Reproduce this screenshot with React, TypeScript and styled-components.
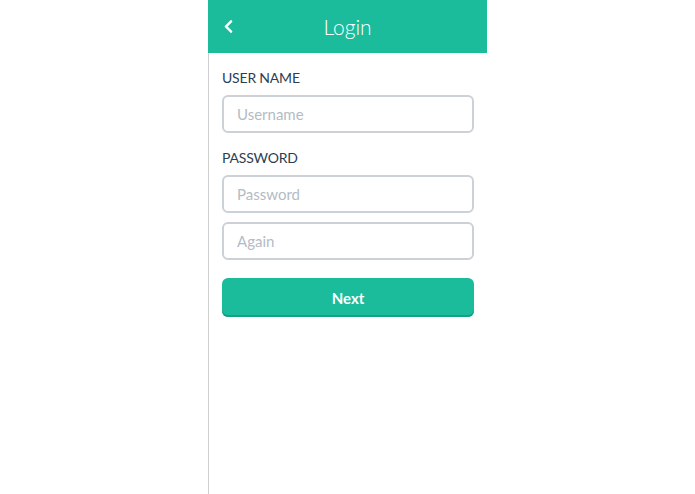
import React from 'react';
import styled, { createGlobalStyle } from 'styled-components';
import { FaChevronLeft } from 'react-icons/fa';

const GlobalStyle = createGlobalStyle`
  html, body {
    margin: 0;
    padding: 0;
    background: #ffffff;
  }

  body {
    font-family: Lato, "Open Sans", sans-serif;
  }

  * {
    box-sizing: border-box;
  }
`

export default function App() {
  return (
    <>
      <GlobalStyle />
      <Screen>
        <Header>
          <BackButton aria-label="Back">
            <FaChevronLeft />
          </BackButton>
          <Title>Login</Title>
          <span />
        </Header>
        <Form onSubmit={e => e.preventDefault()}>
          <Label htmlFor="username">User name</Label>
          <Input id="username" placeholder="Username" />
          <Label htmlFor="password" $first={false}>Password</Label>
          <Input id="password" type="password" placeholder="Password" />
          <Input type="password" placeholder="Again" $spaced />
          <NextButton type="submit">Next</NextButton>
        </Form>
      </Screen>
    </>
  );
}

const Screen = styled.div`
  width: 279px;
  min-height: 494px;
  margin: 0 auto;
  border-left: 1px solid #cfcfcf;
  background: #ffffff;
`

const Header = styled.header`
  display: grid;
  grid-template-columns: 40px 1fr 40px;
  align-items: center;
  height: 53px;
  margin-left: -1px;
  background: #1abc9c;
  color: #ffffff;
`

const BackButton = styled.button`
  display: flex;
  align-items: center;
  justify-content: flex-start;
  padding: 0 0 0 13px;
  margin-top: 0;
  border: 0;
  background: transparent;
  color: #ffffff;
  font-size: 15px;
  cursor: pointer;
`

const Title = styled.h1`
  margin: 0 0 1px;
  text-align: center;
  font-family: Lato, sans-serif;
  font-size: 21px;
  font-weight: 300;
`

const Form = styled.form`
  display: flex;
  flex-direction: column;
  padding: 15px 13px 0 13px;
`

interface LabelProps {
  $first?: boolean;
}

const Label = styled.label<LabelProps>`
  display: block;
  margin: ${props => props.$first === false ? '15px' : '0'} 0 7px;
  line-height: 20px;
  font-size: 14px;
  color: #2c3e50;
  text-transform: uppercase;
  letter-spacing: -0.2px;
`

interface InputProps {
  $spaced?: boolean;
}

const Input = styled.input<InputProps>`
  display: block;
  width: 100%;
  height: 38px;
  margin-top: ${props => props.$spaced ? '9px' : '0'};
  padding: 0 13px;
  border: 2px solid #cbd1d6;
  border-radius: 6px;
  background: #ffffff;
  font-family: Lato, sans-serif;
  font-size: 15px;
  color: #34495e;
  outline: none;

  &::placeholder {
    color: #b2bcc5;
  }
`

const NextButton = styled.button`
  height: 39px;
  margin-top: 18px;
  border: 0;
  border-radius: 6px;
  background: #1abc9c;
  box-shadow: inset 0 -2px 0 #16a085;
  color: #ffffff;
  font-family: Lato, sans-serif;
  font-size: 15px;
  font-weight: 700;
  cursor: pointer;
`
